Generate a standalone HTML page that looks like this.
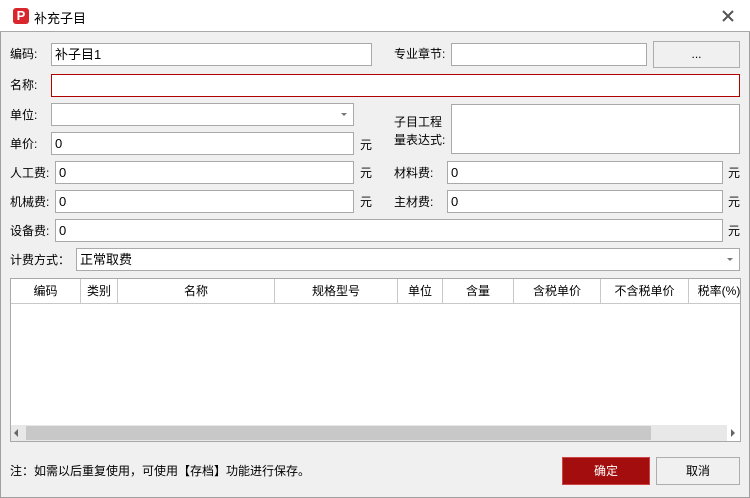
<!DOCTYPE html>
<html><head><meta charset="utf-8"><style>
*{box-sizing:border-box;margin:0;padding:0}
body{width:750px;height:498px;overflow:hidden;background:#f0f0f0;font-family:"Liberation Sans","Noto Sans CJK SC",sans-serif;font-size:12px;color:#000;position:relative}
.win{position:absolute;left:0;top:0;width:750px;height:498px;border:1px solid #a0a0a0}
.title{position:absolute;left:0;top:0;width:750px;height:32px;background:#fff;border-bottom:1px solid #a8a8a8}
.a{position:absolute}
.in{position:absolute;background:#fff;border:1px solid #a9a9a9;height:23px;line-height:21px;padding-left:3px;font-size:13px}
.lb{position:absolute;font-size:12px;line-height:14px}
.arr{position:absolute;right:6px;top:9px;width:0;height:0;border-left:3px solid transparent;border-right:3px solid transparent;border-top:3px solid #777}
.th{position:absolute;top:0;height:24px;line-height:24px;text-align:center;border-right:1px solid #c8c8c8;font-size:12px}
</style></head><body>
<div class="win"></div>
<div class="title">
  <div class="a" style="left:13px;top:8px;width:16px;height:16px;background:#d8262c;border-radius:3px;color:#fff;font-weight:bold;font-size:13px;line-height:16px;text-align:center">P</div>
  <div class="a" style="left:34px;top:8px;font-size:13px">补充子目</div>
  <svg class="a" style="left:722px;top:10px" width="12" height="12"><path d="M1 1L11 11M11 1L1 11" stroke="#555" stroke-width="2"/></svg>
</div>

<div class="lb" style="left:10px;top:47px">编码:</div>
<div class="in" style="left:51px;top:43px;width:321px">补子目1</div>
<div class="lb" style="left:394px;top:47px">专业章节:</div>
<div class="in" style="left:451px;top:43px;width:196px"></div>
<div class="a" style="left:653px;top:41px;width:87px;height:27px;border:1px solid #adadad;background:#f0f0f0;text-align:center;line-height:24px">...</div>

<div class="lb" style="left:10px;top:78px">名称:</div>
<div class="in" style="left:51px;top:74px;width:689px;border-color:#b00000"></div>

<div class="lb" style="left:10px;top:108px">单位:</div>
<div class="in" style="left:51px;top:103px;width:303px"><div class="arr"></div></div>
<div class="lb" style="left:394px;top:113px;line-height:18px">子目工程<br>量表达式:</div>
<div class="in" style="left:451px;top:104px;width:289px;height:50px"></div>

<div class="lb" style="left:10px;top:137px">单价:</div>
<div class="in" style="left:51px;top:132px;width:303px">0</div>
<div class="lb" style="left:360px;top:138px">元</div>

<div class="lb" style="left:10px;top:166px">人工费:</div>
<div class="in" style="left:55px;top:161px;width:299px">0</div>
<div class="lb" style="left:360px;top:166px">元</div>
<div class="lb" style="left:394px;top:166px">材料费:</div>
<div class="in" style="left:447px;top:161px;width:276px">0</div>
<div class="lb" style="left:728px;top:166px">元</div>

<div class="lb" style="left:10px;top:195px">机械费:</div>
<div class="in" style="left:55px;top:190px;width:299px">0</div>
<div class="lb" style="left:360px;top:195px">元</div>
<div class="lb" style="left:394px;top:195px">主材费:</div>
<div class="in" style="left:447px;top:190px;width:276px">0</div>
<div class="lb" style="left:728px;top:195px">元</div>

<div class="lb" style="left:10px;top:224px">设备费:</div>
<div class="in" style="left:55px;top:219px;width:668px">0</div>
<div class="lb" style="left:728px;top:224px">元</div>

<div class="lb" style="left:10px;top:253px">计费方式：</div>
<div class="in" style="left:76px;top:248px;width:664px">正常取费<div class="arr"></div></div>

<div class="a" style="left:10px;top:278px;width:731px;height:164px;border:1px solid #a9a9a9;background:#fff;overflow:hidden">
  <div class="a" style="left:0;top:0;width:729px;height:25px;border-bottom:1px solid #c8c8c8">
    <div class="th" style="left:0;width:70px">编码</div>
    <div class="th" style="left:70px;width:37px">类别</div>
    <div class="th" style="left:107px;width:157px">名称</div>
    <div class="th" style="left:264px;width:123px">规格型号</div>
    <div class="th" style="left:387px;width:45px">单位</div>
    <div class="th" style="left:432px;width:71px">含量</div>
    <div class="th" style="left:503px;width:87px">含税单价</div>
    <div class="th" style="left:590px;width:88px">不含税单价</div>
    <div class="th" style="left:678px;width:60px;border:none">税率(%)</div>
  </div>
  <div class="a" style="left:0;top:146px;width:729px;height:16px;background:#e8e8e8">
    <div class="a" style="left:3px;top:4px;border-top:4px solid transparent;border-bottom:4px solid transparent;border-right:4px solid #666"></div>
    <div class="a" style="left:15px;top:1px;width:625px;height:14px;background:#c8c8c8"></div>
    <div class="a" style="left:716px;top:0;width:13px;height:16px;background:#fff"></div>
    <div class="a" style="left:720px;top:4px;border-top:4px solid transparent;border-bottom:4px solid transparent;border-left:4px solid #666"></div>
  </div>
</div>

<div class="lb" style="left:10px;top:464px">注：如需以后重复使用，可使用【存档】功能进行保存。</div>
<div class="a" style="left:562px;top:457px;width:88px;height:28px;background:#a30d0d;border:1px solid #c44;color:#fff;text-align:center;line-height:26px;font-size:12px">确定</div>
<div class="a" style="left:656px;top:457px;width:84px;height:28px;background:#f0f0f0;border:1px solid #adadad;text-align:center;line-height:26px;font-size:12px">取消</div>
</body></html>
